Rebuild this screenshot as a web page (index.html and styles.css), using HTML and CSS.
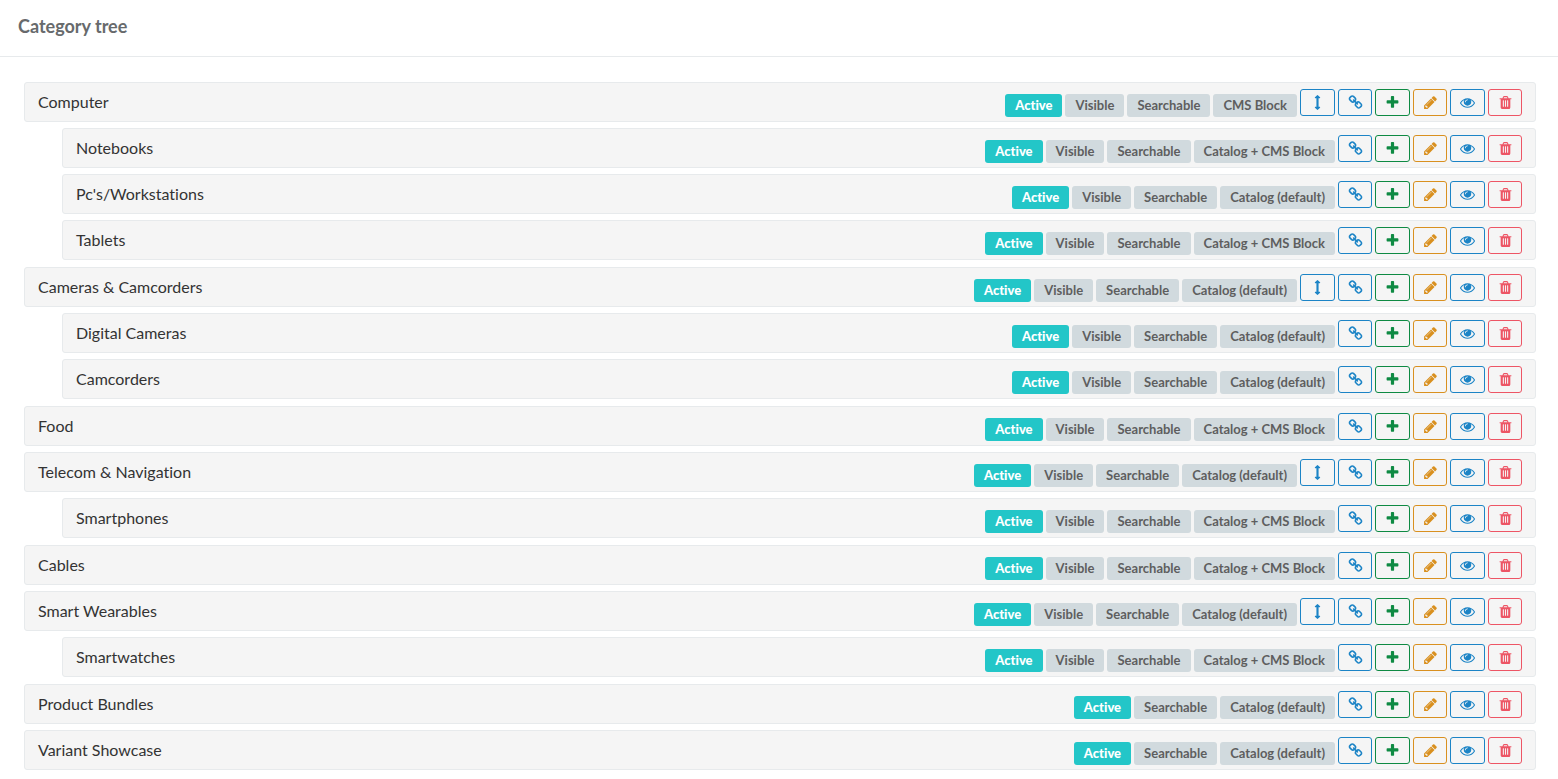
FILE: index.html
```html
<!DOCTYPE html>
<html lang="en">
<head>
<meta charset="utf-8">
<meta name="viewport" content="width=device-width, initial-scale=1">
<title>Category tree</title>
<link rel="stylesheet" href="styles.css">
</head>
<body>
<svg class="sprite" aria-hidden="true">
  <symbol id="i-move" viewBox="0 0 1792 1792"><path d="M1216 320q0 26-19 45t-45 19h-128v1024h128q26 0 45 19t19 45-19 45l-256 256q-19 19-45 19t-45-19l-256-256q-19-19-19-45t19-45 45-19h128v-1024h-128q-26 0-45-19t-19-45 19-45l256-256q19-19 45-19t45 19l256 256q19 19 19 45z"/></symbol>
  <symbol id="i-link" viewBox="0 0 1792 1792"><path d="M1520 1216q0-40-28-68l-208-208q-28-28-68-28-42 0-72 32 3 3 19 18.500t21.500 21.500 15 19 13 25.500 3.500 27.500q0 40-28 68t-68 28q-15 0-27.500-3.500t-25.500-13-19-15-21.500-21.500-18.500-19q-33 31-33 73 0 40 28 68l206 207q27 27 68 27 40 0 68-26l147-146q28-28 28-67zm-703-705q0-40-28-68l-206-207q-28-28-68-28-39 0-68 27l-147 146q-28 28-28 67 0 40 28 68l208 208q27 27 68 27 42 0 72-31-3-3-19-18.500t-21.500-21.500-15-19-13-25.500-3.500-27.500q0-40 28-68t68-28q15 0 27.500 3.500t25.500 13 19 15 21.500 21.500 18.500 19q33-31 33-73zm895 705q0 120-85 203l-147 146q-83 83-203 83-121 0-204-85l-206-207q-83-83-83-203 0-123 88-209l-88-88q-86 88-208 88-120 0-204-84l-208-208q-84-84-84-204t85-203l147-146q83-83 203-83 121 0 204 85l206 207q83 83 83 203 0 123-88 209l88 88q86-88 208-88 120 0 204 84l208 208q84 84 84 204z"/></symbol>
  <symbol id="i-add" viewBox="0 0 1792 1792"><path d="M1600 736v192q0 40-28 68t-68 28h-416v416q0 40-28 68t-68 28h-192q-40 0-68-28t-28-68v-416h-416q-40 0-68-28t-28-68v-192q0-40 28-68t68-28h416v-416q0-40 28-68t68-28h192q40 0 68 28t28 68v416h416q40 0 68 28t28 68z"/></symbol>
  <symbol id="i-edit" viewBox="0 0 1792 1792"><path d="M491 1536l91-91-235-235-91 91v107h128v128h107zm523-928q0-22-22-22-10 0-17 7l-542 542q-7 7-7 17 0 22 22 22 10 0 17-7l542-542q7-7 7-17zm-54-192l416 416-832 832h-416v-416zm683 96q0 53-37 90l-166 166-416-416 166-165q36-38 90-38 53 0 91 38l235 234q37 39 37 91z"/></symbol>
  <symbol id="i-view" viewBox="0 0 1792 1792"><path d="M1664 960q-152-236-381-353 61 104 61 225 0 185-131.500 316.500t-316.500 131.500-316.500-131.500-131.500-316.500q0-121 61-225-229 117-381 353 133 205 333.500 326.500t434.500 121.500 434.500-121.500 333.500-326.500zm-720-384q0-20-14-34t-34-14q-125 0-214.500 89.500t-89.500 214.500q0 20 14 34t34 14 34-14 14-34q0-86 61-147t147-61q20 0 34-14t14-34zm848 384q0 34-20 69-140 230-376.500 368.500t-499.500 138.500-499.500-139-376.500-368q-20-35-20-69t20-69q140-229 376.500-368t499.500-139 499.500 139 376.500 368q20 35 20 69z"/></symbol>
  <symbol id="i-delete" viewBox="0 0 1792 1792"><path d="M704 1376v-704q0-14-9-23t-23-9h-64q-14 0-23 9t-9 23v704q0 14 9 23t23 9h64q14 0 23-9t9-23zm256 0v-704q0-14-9-23t-23-9h-64q-14 0-23 9t-9 23v704q0 14 9 23t23 9h64q14 0 23-9t9-23zm256 0v-704q0-14-9-23t-23-9h-64q-14 0-23 9t-9 23v704q0 14 9 23t23 9h64q14 0 23-9t9-23zm-544-992h448l-48-117q-7-9-17-11h-317q-10 2-17 11zm928 32v64q0 14-9 23t-23 9h-96v948q0 83-47 143.500t-113 60.500h-832q-66 0-113-58.500t-47-141.500v-952h-96q-14 0-23-9t-9-23v-64q0-14 9-23t23-9h309l70-167q15-37 54-63t79-26h320q40 0 79 26t54 63l70 167h309q14 0 23 9t9 23z"/></symbol>
</svg>
<header class="header"><h1 class="title">Category tree</h1></header>
<main class="content"><ul class="tree" id="tree"></ul></main>
<script src="tree.js"></script>
</body>
</html>
```
FILE: styles.css
```css
* { box-sizing: border-box; }
body {
  margin: 0;
  background: #fff;
  color: #333;
  font-family: Lato, "Open Sans", sans-serif;
  font-size: 16px;
  font-variant-ligatures: none;
  line-height: 20px;
}
.sprite { display: none; }
.header {
  padding: 16px 18px 20px;
  border-bottom: 1px solid #e7eaec;
}
.title {
  margin: 0;
  color: #676a6c;
  font-size: 18px;
  font-weight: 700;
  line-height: 20px;
}
.content { padding: 25px 22px 9px 24px; }
.tree, .subtree {
  display: flex;
  flex-direction: column;
  gap: 6px;
  margin: 0;
  padding: 0;
  list-style: none;
}
.subtree { padding: 6px 0 1px 38px; }
.row {
  display: flex;
  align-items: flex-start;
  justify-content: space-between;
  min-height: 40px;
  padding: 6px 13px 4px;
  background: #f5f5f5;
  border: 1px solid #e7eaec;
  border-radius: 3px;
}
.name { padding-top: 3px; }
.tools { display: flex; gap: 3px; }
.badge {
  height: 23px;
  margin-top: 5px;
  padding: 0 10px;
  border-radius: 3px;
  background: #d1dade;
  color: #5e5e5e;
  font-size: 13px;
  font-weight: 700;
  line-height: 23px;
  white-space: nowrap;
}
.badge-active {
  background: #23c6c8;
  color: #fff;
  font-weight: 900;
}
.button {
  display: flex;
  align-items: center;
  justify-content: center;
  width: 34px;
  height: 27px;
  padding: 0;
  background: transparent;
  border: 1px solid currentColor;
  border-radius: 3px;
  color: #1c84c6;
  cursor: pointer;
}
.button-move, .button-add, .button-view { width: 35px; }
.button-add { color: #0e8a43; }
.button-edit { color: #d9901f; }
.button-delete { color: #ed5565; }
.icon {
  width: 15px;
  height: 15px;
  fill: currentColor;
}
```
FILE: tree.js
```js
const DEFAULT = 'Catalog (default)';
const MIXED = 'Catalog + CMS Block';

const categories = [
  { name: 'Computer', block: 'CMS Block', children: [
    { name: 'Notebooks', block: MIXED },
    { name: "Pc's/Workstations", block: DEFAULT },
    { name: 'Tablets', block: MIXED },
  ] },
  { name: 'Cameras & Camcorders', block: DEFAULT, children: [
    { name: 'Digital Cameras', block: DEFAULT },
    { name: 'Camcorders', block: DEFAULT },
  ] },
  { name: 'Food', block: MIXED },
  { name: 'Telecom & Navigation', block: DEFAULT, children: [
    { name: 'Smartphones', block: MIXED },
  ] },
  { name: 'Cables', block: MIXED },
  { name: 'Smart Wearables', block: DEFAULT, children: [
    { name: 'Smartwatches', block: MIXED },
  ] },
  { name: 'Product Bundles', block: DEFAULT, hidden: true },
  { name: 'Variant Showcase', block: DEFAULT, hidden: true },
];

function element(tag, className, text) {
  const node = document.createElement(tag);
  node.className = className;
  if (text) node.textContent = text;
  return node;
}

function button(action, name) {
  const node = element('button', `button button-${action}`);
  node.type = 'button';
  node.setAttribute('aria-label', `${action} ${name}`);
  node.innerHTML = `<svg class="icon" aria-hidden="true"><use href="#i-${action}"/></svg>`;
  return node;
}

function item(category) {
  const li = element('li', 'item');
  const row = element('div', 'row');
  const tools = element('div', 'tools');
  tools.append(element('span', 'badge badge-active', 'Active'));
  if (!category.hidden) tools.append(element('span', 'badge', 'Visible'));
  tools.append(element('span', 'badge', 'Searchable'), element('span', 'badge', category.block));
  const actions = ['link', 'add', 'edit', 'view', 'delete'];
  if (category.children) actions.unshift('move');
  actions.forEach((action) => tools.append(button(action, category.name)));
  row.append(element('span', 'name', category.name), tools);
  li.append(row);
  if (category.children) {
    const list = element('ul', 'subtree');
    list.append(...category.children.map(item));
    li.append(list);
  }
  return li;
}

document.getElementById('tree').append(...categories.map(item));
```
